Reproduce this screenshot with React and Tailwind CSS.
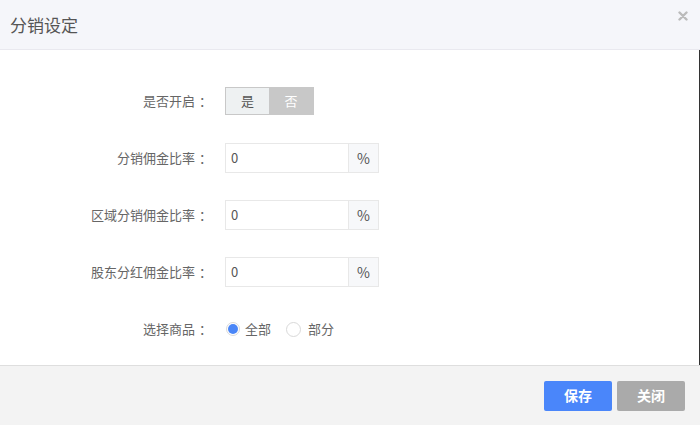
import React from "react";

const font = { fontFamily: '"Microsoft YaHei", "Noto Sans CJK SC", "Noto Sans", sans-serif' };

function Row({ label, children }) {
  return (
    <div className="flex items-center h-[30px]">
      <div className="w-[212px] text-right text-[13px] text-[#666] whitespace-nowrap">
        {label}
        <span className="pl-[4px]">：</span>
      </div>
      <div className="ml-[13px] flex items-center">{children}</div>
    </div>
  );
}

function RateInput() {
  return (
    <div className="flex h-[30px]">
      <div className="w-[124px] border border-[#e8e8e8] flex items-center pl-[5px] text-[13px] text-[#555]">0</div>
      <div className="w-[30px] border border-l-0 border-[#e8e8e8] bg-[#f7f8fa] flex items-center justify-center text-[14px] text-[#555]">%</div>
    </div>
  );
}

export default function App() {
  return (
    <div className="w-[700px] h-[425px] flex flex-col bg-white overflow-hidden" style={font}>
      <div className="h-[50px] bg-[#f5f6fa] border-b border-[#e9e9ef] flex items-center justify-between px-[10px] shrink-0">
        <div className="text-[17px] text-[#555]">分销设定</div>
        <svg width="10" height="10" viewBox="0 0 10 10" className="mr-[2px] -mt-[18px]">
          <path d="M1.5 1.5 L8.5 8.5 M8.5 1.5 L1.5 8.5" stroke="#bbbbbb" strokeWidth="2.4" strokeLinecap="round" />
        </svg>
      </div>
      <div className="flex-1 border-r border-[#333] flex flex-col pt-[36px] gap-[27px]">
        <Row label="是否开启">
          <div className="flex h-[28px] border border-[#c8c8c8] -mt-[1px]">
            <div className="w-[43px] bg-[#eef1f2] flex items-center justify-center text-[13px] text-[#555]">是</div>
            <div className="w-[44px] bg-[#c8c8c8] flex items-center justify-center text-[13px] text-white">否</div>
          </div>
        </Row>
        <Row label="分销佣金比率"><RateInput /></Row>
        <Row label="区域分销佣金比率"><RateInput /></Row>
        <Row label="股东分红佣金比率"><RateInput /></Row>
        <Row label="选择商品">
          <div className="flex items-center text-[13px] text-[#666] ml-[1px]">
            <span className="w-[14px] h-[14px] rounded-full border border-[#d9d9d9] flex items-center justify-center">
              <span className="w-[10px] h-[10px] rounded-full bg-[#4a86f7]" />
            </span>
            <span className="ml-[5px]">全部</span>
            <span className="ml-[15px] w-[15px] h-[15px] rounded-full border border-[#d9d9d9] bg-white" />
            <span className="ml-[7px]">部分</span>
          </div>
        </Row>
      </div>
      <div className="h-[60px] shrink-0 bg-[#f3f3f3] border-t border-[#dedede] flex items-center justify-end pr-[15px] gap-[5px]">
        <div className="w-[68px] h-[30px] rounded-[2px] bg-[#4a86fa] text-white text-[14px] font-bold flex items-center justify-center">保存</div>
        <div className="w-[68px] h-[30px] rounded-[2px] bg-[#aaaaaa] text-white text-[14px] font-bold flex items-center justify-center">关闭</div>
      </div>
    </div>
  );
}
